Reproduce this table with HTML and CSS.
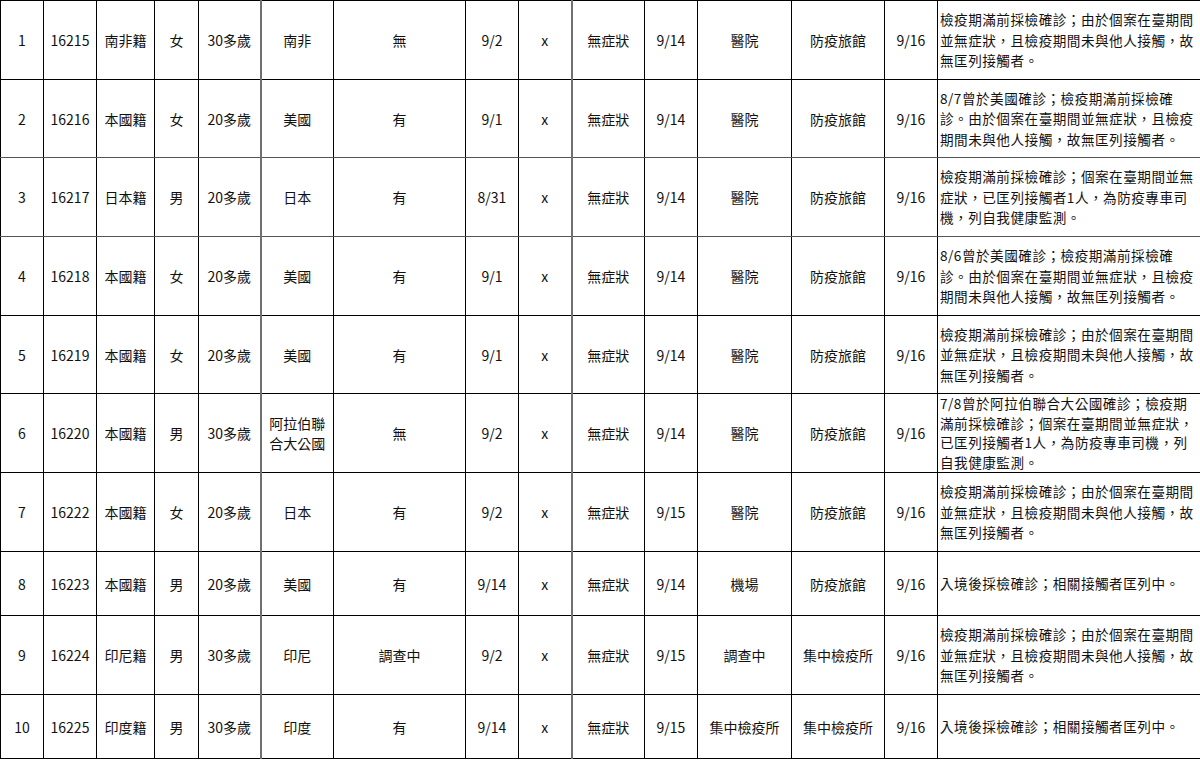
FILE: index.html
```html
<!DOCTYPE html>
<html lang="zh-Hant">
<head>
<meta charset="utf-8">
<title>確診個案</title>
<link rel="stylesheet" href="styles.css">
</head>
<body>
<table class="cases">
  <colgroup>
    <col class="c1"><col class="c2"><col class="c3"><col class="c4"><col class="c5">
    <col class="c6"><col class="c7"><col class="c8"><col class="c9"><col class="c10">
    <col class="c11"><col class="c12"><col class="c13"><col class="c14"><col class="c15">
  </colgroup>
  <tbody>
    <tr class="r79">
      <td>1</td><td>16215</td><td>南非籍</td><td>女</td><td>30多歲</td><td class="gl">南非</td><td>無</td><td>9/2</td><td>x</td><td class="gl">無症狀</td><td>9/14</td><td>醫院</td><td>防疫旅館</td><td>9/16</td>
      <td class="desc">檢疫期滿前採檢確診；由於個案在臺期間<br>並無症狀，且檢疫期間未與他人接觸，故<br>無匡列接觸者。</td>
    </tr>
    <tr class="r78 gb">
      <td>2</td><td>16216</td><td>本國籍</td><td>女</td><td>20多歲</td><td class="gl">美國</td><td>有</td><td>9/1</td><td>x</td><td class="gl">無症狀</td><td>9/14</td><td>醫院</td><td>防疫旅館</td><td>9/16</td>
      <td class="desc">8/7曾於美國確診；檢疫期滿前採檢確<br>診。由於個案在臺期間並無症狀，且檢疫<br>期間未與他人接觸，故無匡列接觸者。</td>
    </tr>
    <tr class="r79 gb">
      <td>3</td><td>16217</td><td>日本籍</td><td>男</td><td>20多歲</td><td class="gl">日本</td><td>有</td><td>8/31</td><td>x</td><td class="gl">無症狀</td><td>9/14</td><td>醫院</td><td>防疫旅館</td><td>9/16</td>
      <td class="desc">檢疫期滿前採檢確診；個案在臺期間並無<br>症狀，已匡列接觸者1人，為防疫專車司<br>機，列自我健康監測。</td>
    </tr>
    <tr class="r79">
      <td>4</td><td>16218</td><td>本國籍</td><td>女</td><td>20多歲</td><td class="gl">美國</td><td>有</td><td>9/1</td><td>x</td><td class="gl">無症狀</td><td>9/14</td><td>醫院</td><td>防疫旅館</td><td>9/16</td>
      <td class="desc">8/6曾於美國確診；檢疫期滿前採檢確<br>診。由於個案在臺期間並無症狀，且檢疫<br>期間未與他人接觸，故無匡列接觸者。</td>
    </tr>
    <tr class="r78">
      <td>5</td><td>16219</td><td>本國籍</td><td>女</td><td>20多歲</td><td class="gl">美國</td><td>有</td><td>9/1</td><td>x</td><td class="gl">無症狀</td><td>9/14</td><td>醫院</td><td>防疫旅館</td><td>9/16</td>
      <td class="desc">檢疫期滿前採檢確診；由於個案在臺期間<br>並無症狀，且檢疫期間未與他人接觸，故<br>無匡列接觸者。</td>
    </tr>
    <tr class="r79">
      <td>6</td><td>16220</td><td>本國籍</td><td>男</td><td>30多歲</td><td class="gl">阿拉伯聯<br>合大公國</td><td>無</td><td>9/2</td><td>x</td><td class="gl">無症狀</td><td>9/14</td><td>醫院</td><td>防疫旅館</td><td>9/16</td>
      <td class="desc tight">7/8曾於阿拉伯聯合大公國確診；檢疫期<br>滿前採檢確診；個案在臺期間並無症狀，<br>已匡列接觸者1人，為防疫專車司機，列<br>自我健康監測。</td>
    </tr>
    <tr class="r79">
      <td>7</td><td>16222</td><td>本國籍</td><td>女</td><td>20多歲</td><td class="gl">日本</td><td>有</td><td>9/2</td><td>x</td><td class="gl">無症狀</td><td>9/15</td><td>醫院</td><td>防疫旅館</td><td>9/16</td>
      <td class="desc">檢疫期滿前採檢確診；由於個案在臺期間<br>並無症狀，且檢疫期間未與他人接觸，故<br>無匡列接觸者。</td>
    </tr>
    <tr class="r64">
      <td>8</td><td>16223</td><td>本國籍</td><td>男</td><td>20多歲</td><td class="gl">美國</td><td>有</td><td>9/14</td><td>x</td><td class="gl">無症狀</td><td>9/14</td><td>機場</td><td>防疫旅館</td><td>9/16</td>
      <td class="desc">入境後採檢確診；相關接觸者匡列中。</td>
    </tr>
    <tr class="r79">
      <td>9</td><td>16224</td><td>印尼籍</td><td>男</td><td>30多歲</td><td class="gl">印尼</td><td>調查中</td><td>9/2</td><td>x</td><td class="gl">無症狀</td><td>9/15</td><td>調查中</td><td>集中檢疫所</td><td>9/16</td>
      <td class="desc">檢疫期滿前採檢確診；由於個案在臺期間<br>並無症狀，且檢疫期間未與他人接觸，故<br>無匡列接觸者。</td>
    </tr>
    <tr class="r64">
      <td>10</td><td>16225</td><td>印度籍</td><td>男</td><td>30多歲</td><td class="gl">印度</td><td>有</td><td>9/14</td><td>x</td><td class="gl">無症狀</td><td>9/15</td><td>集中檢疫所</td><td>集中檢疫所</td><td>9/16</td>
      <td class="desc">入境後採檢確診；相關接觸者匡列中。</td>
    </tr>
  </tbody>
</table>
</body>
</html>
```

FILE: styles.css
```css
html, body {
  margin: 0;
  padding: 0;
  background: #ffffff;
}

.cases {
  border-collapse: collapse;
  table-layout: fixed;
  width: 1200px;
  font-family: "Noto Sans CJK TC", "Noto Sans", sans-serif;
  font-size: 14px;
  color: #111111;
}

.c1 { width: 43px; }
.c2 { width: 53px; }
.c3 { width: 58px; }
.c4 { width: 44px; }
.c5 { width: 62px; }
.c6 { width: 73px; }
.c7 { width: 132px; }
.c8 { width: 53px; }
.c9 { width: 53px; }
.c10 { width: 73px; }
.c11 { width: 53px; }
.c12 { width: 94px; }
.c13 { width: 93px; }
.c14 { width: 53px; }
.c15 { width: 263px; }

.cases td {
  border: 1px solid #000000;
  padding: 0;
  text-align: center;
  vertical-align: middle;
  line-height: 20px;
  white-space: nowrap;
  overflow: hidden;
}

.cases td.gl {
  border-left: 2px solid #707070;
}

.cases tr.gb td {
  border-bottom: 1px solid #555555;
}

.cases td.desc {
  text-align: left;
  padding-left: 2px;
  font-size: 13.6px;
  line-height: 20.5px;
  letter-spacing: 0.5px;
}

.cases td.desc.tight {
  line-height: 19.5px;
}

.r79 { height: 79px; }
.r78 { height: 78px; }
.r64 { height: 64px; }
```
